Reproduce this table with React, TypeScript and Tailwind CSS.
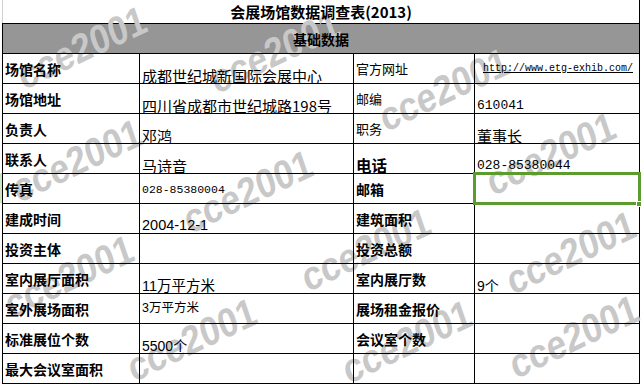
import React from 'react';

const cjk = "font-['Noto_Sans_CJK_SC',sans-serif] leading-none text-black";
const mixed = "font-['Liberation_Sans','Noto_Sans_CJK_SC',sans-serif] leading-none text-black";
const mono = "font-['Liberation_Mono',monospace] leading-none text-black";

// watermark centres, read off the screenshot
const marks = [
    'left-[82px] top-[48px]',
    'left-[275px] top-[52px]',
    'left-[444px] top-[90px]',
    'left-[551px] top-[154px]',
    'left-[77px] top-[161px]',
    'left-[248px] top-[192px]',
    'left-[366px] top-[250px]',
    'left-[571px] top-[253px]',
    'left-[69px] top-[277px]',
    'left-[192px] top-[340px]',
    'left-[407px] top-[342px]',
    'left-[574px] top-[337px]',
];

function Cell({ children, className = '' }: { children?: React.ReactNode; className?: string }) {
    return (
        <div className={`relative z-[2] flex h-[30px] border-l border-t border-black pl-[2px] ${className}`}>
            {children}
        </div>
    );
}

function Label({ text }: { text: string }) {
    return (
        <Cell className="items-center">
            <span className={`${cjk} text-[14px] font-bold`}>{text}</span>
        </Cell>
    );
}

export default function App() {
    return (
        <div className="relative h-[384px] w-[641px] overflow-hidden bg-white">
            {/* row header tint for the selected row */}
            <div className="absolute left-0 top-[173px] h-[30px] w-[2px] bg-[#cfe6c2]" />

            <div className="ml-[2px] grid w-[638px] grid-cols-[137px_214px_121px_165px] border-b border-r border-black">
                <div className="relative z-[2] col-span-4 flex h-[23px] items-center justify-center border-l border-[#d0d0d0]">
                    <span className={`${cjk} text-[15px] font-bold`}>会展场馆数据调查表(2013)</span>
                </div>
                <div className="col-span-4 flex h-[30px] items-center justify-center border-l border-t border-black bg-[#969696]">
                    <span className={`relative z-[2] ${cjk} text-[14px] font-bold`}>基础数据</span>
                </div>

                {/* 1 */}
                <Label text="场馆名称" />
                <Cell className="items-end">
                    <span className={`${cjk} text-[15px]`}>成都世纪城新国际会展中心</span>
                </Cell>
                <Cell className="items-center">
                    <span className={`${cjk} text-[13px]`}>官方网址</span>
                </Cell>
                <Cell className="items-center justify-center">
                    <span className={`${mono} text-[10px] text-[#0000ff] underline`}>http://www.etg-exhib.com/</span>
                </Cell>

                {/* 2 */}
                <Label text="场馆地址" />
                <Cell className="items-end">
                    <span className={`${cjk} text-[15px]`}>四川省成都市世纪城路198号</span>
                </Cell>
                <Cell className="items-center">
                    <span className={`${cjk} text-[13px]`}>邮编</span>
                </Cell>
                <Cell className="items-end pb-[1px]">
                    <span className={`${mono} text-[13px]`}>610041</span>
                </Cell>

                {/* 3 */}
                <Label text="负责人" />
                <Cell className="items-end">
                    <span className={`${cjk} text-[15px]`}>邓鸿</span>
                </Cell>
                <Cell className="items-center">
                    <span className={`${cjk} text-[13px]`}>职务</span>
                </Cell>
                <Cell className="items-end">
                    <span className={`${cjk} text-[15px]`}>董事长</span>
                </Cell>

                {/* 4 */}
                <Label text="联系人" />
                <Cell className="items-end">
                    <span className={`${cjk} text-[15px]`}>马诗音</span>
                </Cell>
                <Cell className="items-end">
                    <span className={`${cjk} text-[15.5px] font-bold`}>电话</span>
                </Cell>
                <Cell className="items-end pb-[1px]">
                    <span className={`${mono} text-[13px]`}>028-85380044</span>
                </Cell>

                {/* 5 */}
                <Label text="传真" />
                <Cell className="items-center pt-[2px]">
                    <span className={`${mono} text-[11.5px]`}>028-85380004</span>
                </Cell>
                <Label text="邮箱" />
                <Cell className="z-[3]">
                    <div className="absolute -inset-[2px] border-[3px] border-[#5c9b2e]" />
                    <div className="absolute -bottom-[4px] -right-[3px] h-[6px] w-[6px] border border-white bg-[#5c9b2e]" />
                </Cell>

                {/* 6 */}
                <Label text="建成时间" />
                <Cell className="items-end pb-[1px]">
                    <span className={`${mixed} text-[14.5px]`}>2004-12-1</span>
                </Cell>
                <Label text="建筑面积" />
                <Cell />

                {/* 7 */}
                <Label text="投资主体" />
                <Cell />
                <Label text="投资总额" />
                <Cell />

                {/* 8 */}
                <Label text="室内展厅面积" />
                <Cell className="items-end">
                    <span className={`${mixed} text-[14.5px]`}>11万平方米</span>
                </Cell>
                <Label text="室内展厅数" />
                <Cell className="items-end">
                    <span className={`${mixed} text-[14px]`}>9个</span>
                </Cell>

                {/* 9 */}
                <Label text="室外展场面积" />
                <Cell className="items-center">
                    <span className={`${mixed} text-[12.5px]`}>3万平方米</span>
                </Cell>
                <Label text="展场租金报价" />
                <Cell />

                {/* 10 */}
                <Label text="标准展位个数" />
                <Cell className="items-end">
                    <span className={`${mixed} text-[14px]`}>5500个</span>
                </Cell>
                <Label text="会议室个数" />
                <Cell />

                {/* 11 */}
                <Label text="最大会议室面积" />
                <Cell />
                <Cell />
                <Cell />
            </div>

            {/* sheet watermark: above fills, under cell text; squeezed sideways like the shot */}
            <div className="pointer-events-none absolute inset-0 z-[1]">
                {marks.map((m) => (
                    <span key={m} className={`absolute ${m} -translate-x-1/2 -translate-y-1/2 scale-x-[0.85]`}>
                        <span className="inline-block rotate-[-22deg] whitespace-nowrap font-['Liberation_Sans',sans-serif] text-[41px] font-bold leading-none text-[#c8c8c8]">
                            cce2001
                        </span>
                    </span>
                ))}
            </div>
        </div>
    );
}
